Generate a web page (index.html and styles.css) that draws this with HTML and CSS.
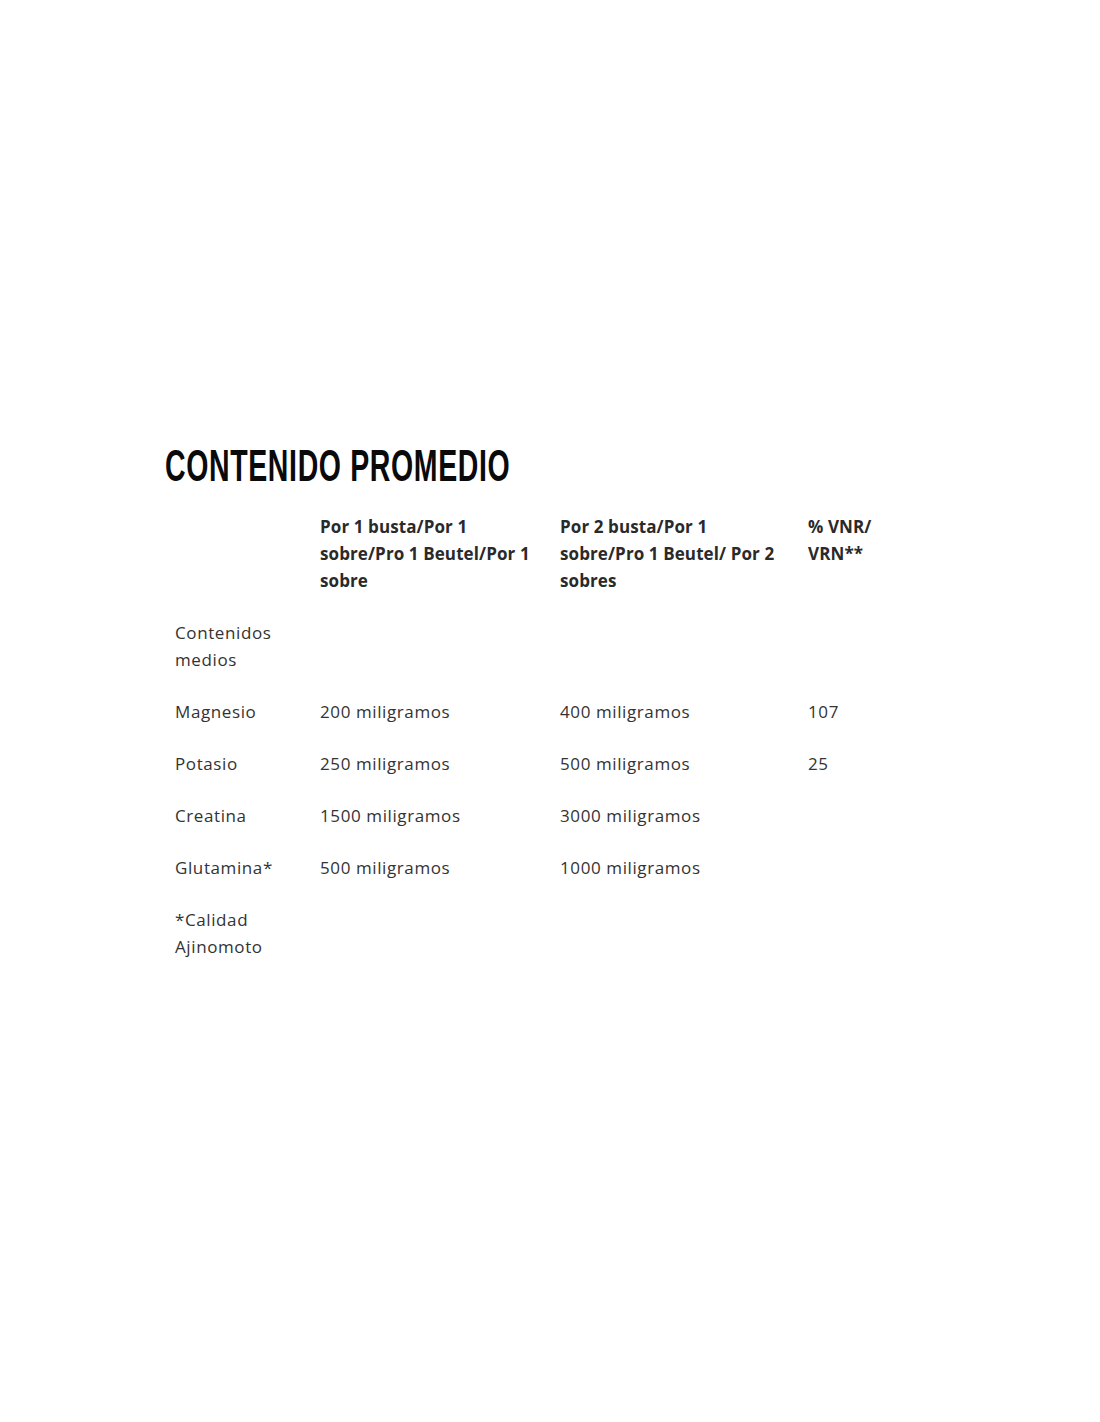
FILE: index.html
```html
<!DOCTYPE html>
<html lang="es">
<head>
<meta charset="utf-8">
<link rel="stylesheet" href="styles.css">
</head>
<body>
<main class="page">
  <section class="content">
    <h2 class="title"><span class="title-text">CONTENIDO PROMEDIO</span></h2>
    <table class="nutri">
      <thead>
        <tr>
          <th class="c1"></th>
          <th class="c2">Por 1 busta/Por 1 sobre/Pro 1 Beutel/Por 1 sobre</th>
          <th class="c3">Por 2 busta/Por 1 sobre/Pro 1 Beutel/ Por 2 sobres</th>
          <th class="c4">% VNR/ VRN**</th>
        </tr>
      </thead>
      <tbody>
        <tr><td>Contenidos medios</td><td></td><td></td><td></td></tr>
        <tr><td>Magnesio</td><td>200 miligramos</td><td>400 miligramos</td><td>107</td></tr>
        <tr><td>Potasio</td><td>250 miligramos</td><td>500 miligramos</td><td>25</td></tr>
        <tr><td>Creatina</td><td>1500 miligramos</td><td>3000 miligramos</td><td></td></tr>
        <tr><td>Glutamina*</td><td>500 miligramos</td><td>1000 miligramos</td><td></td></tr>
        <tr><td>*Calidad Ajinomoto</td><td></td><td></td><td></td></tr>
      </tbody>
    </table>
  </section>
</main>
</body>
</html>
```
FILE: styles.css
```css
html, body {
  margin: 0;
  padding: 0;
  background: #ffffff;
}
.page {
  width: 1100px;
  height: 1422px;
  box-sizing: border-box;
  padding-top: 440px;
}
.content {
  margin-left: 165px;
  width: 770px;
}
.title {
  margin: 0;
  height: 52px;
  font-family: "Liberation Sans Narrow", "Liberation Sans", sans-serif;
  font-weight: 700;
  font-size: 44px;
  line-height: 52px;
  color: #0a0a0a;
}
.title-text {
  display: inline-block;
  transform-origin: left center;
  transform: scaleX(0.647);
  letter-spacing: 1px;
}
.nutri {
  margin-top: 8px;
  border-collapse: collapse;
  font-family: "Open Sans", sans-serif;
  font-size: 17px;
  line-height: 27px;
  color: #333333;
  letter-spacing: 0.6px;
}
.nutri th, .nutri td {
  text-align: left;
  vertical-align: top;
  padding: 12.5px 10px;
}
.nutri th {
  font-weight: 700;
  color: #2a2a2a;
  letter-spacing: 0.1px;
}
.nutri td {
  font-weight: 400;
}
.c1 { width: 125px; }
.c2 { width: 220px; }
.c3 { width: 228px; }
.c4 { width: 110px; }
```
